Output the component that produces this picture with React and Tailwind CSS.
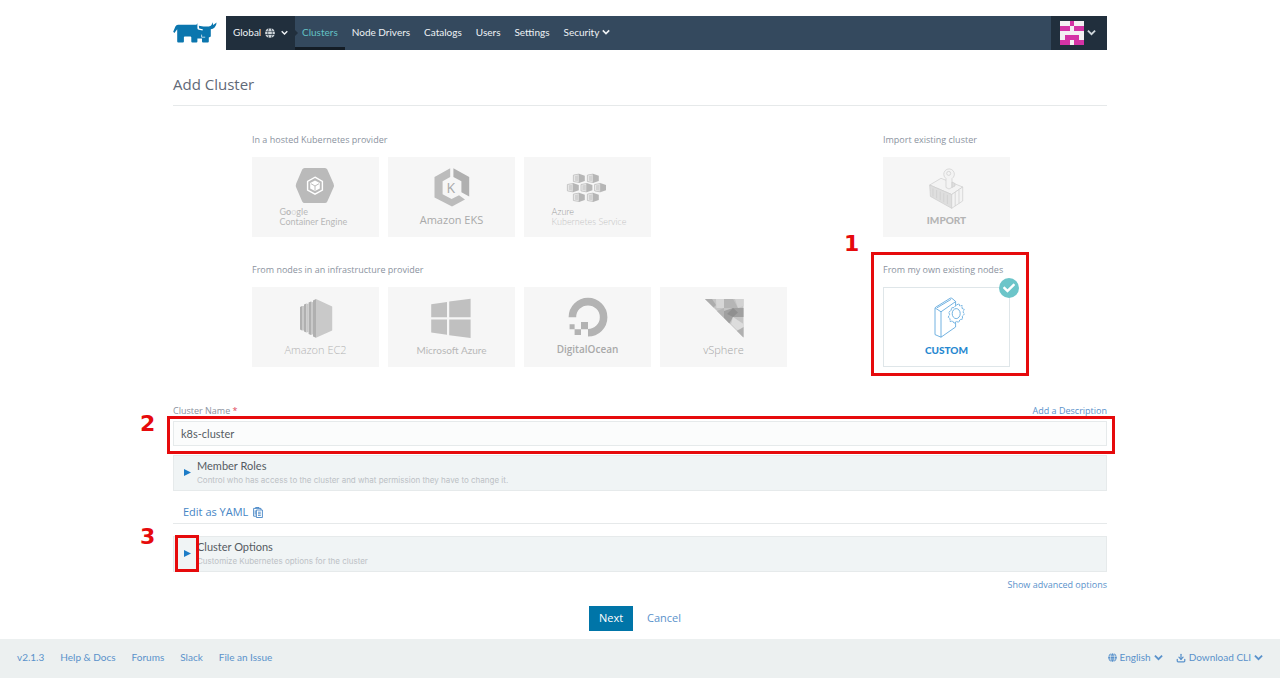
import { useState } from 'react';
import { FaGlobe, FaCheck } from 'react-icons/fa';
import { LuDownload } from 'react-icons/lu';

const RancherLogo = () => (
  <svg className="w-11 h-[22px]" viewBox="0 0 44 22" aria-label="Rancher">
    <path
      fill="#0b76ae"
      d="M.2 9.8 2.4 4.6Q3.2 2.8 5 2.8H23.4L24.4 1.2V6.2Q24.4 7.6 25.8 7.8L29.6 8.4 29.8 7.2 26.2 6.6 25.8 3.8 30.5 4.4H35.4Q38.2 4.6 38.8 2.6L39.4.2 40.2 3 43.6.4Q43.4 3.8 41.6 5.6 40 7.2 37.8 7.2V14.4L35.8 15.6V19.4Q35.8 20.4 34.8 20.4H30Q29 20.4 29 19.4V16.6H24.4V19.4Q24.4 20.4 23.4 20.4H19.3Q18.3 20.4 18.3 19.4V15.2Q18.3 14.4 17.4 14.4H11.8Q10.9 14.4 10.9 15.2V19.4Q10.9 20.4 9.9 20.4H5.2Q4.2 20.4 4.2 19.4V7.2L1.4 11Z"
    />
    <path fill="none" stroke="#fff" strokeWidth=".7" d="M28.6 12.6v2.6h3.6" />
  </svg>
);

// 5x5 identicon
const AVATAR = ['..#..', '##.##', '.....', '.###.', '##.##'];

const Avatar = () => (
  <svg className="w-6 h-6" viewBox="0 0 5 5" shapeRendering="crispEdges" aria-hidden="true">
    <rect width="5" height="5" fill="#f4f0f3" />
    {AVATAR.map((row, y) =>
      row.split('').map((c, x) => c === '#' && <rect key={`${x}${y}`} x={x} y={y} width="1" height="1" fill="#d433a6" />)
    )}
  </svg>
);

const Chevron = ({ className }) => (
  <svg className={className} viewBox="0 0 10 8" aria-hidden="true">
    <path fill="none" stroke="currentColor" strokeWidth="2" d="M1 1.8 5 5.8 9 1.8" />
  </svg>
);

const ClipboardIcon = () => (
  <svg className="w-[10px] h-[11px]" viewBox="0 0 10 11" fill="none" stroke="currentColor" strokeWidth=".9" aria-hidden="true">
    <path d="M3 9.2H.6V1.4H8V3M2.6 1.4V.5H6V1.4M2.2 3.4V7.6" />
    <path d="M3.4 3H9.4V10.5H3.4ZM5 5.2H7.8M5 6.8H7.8M5 8.4H7.8" />
  </svg>
);

const Logo = ({ children }) => (
  <svg className="w-10 h-10 shrink-0 overflow-visible" viewBox="0 0 40 40" aria-hidden="true">
    {children}
  </svg>
);

const GoogleLogo = () => (
  <Logo>
    <path fill="#bababa" d="M8.5 1H29Q30.5 1 31.3 2.5L37.5 16.5Q38.4 18.5 37.5 20.5L31.3 34.5Q30.5 36 29 36H8.5Q7 36 6.2 34.5L.2 20.5Q-.6 18.5.2 16.5L6.2 2.5Q7 1 8.5 1Z" />
    <path fill="#bababa" stroke="#fff" strokeWidth="1.4" d="M19 10.2 26.4 14.4V23L19 27.2 11.6 23V14.4Z" />
    <path fill="#fff" d="M19 13.4 23.8 16.1V21.4L19 24.1 14.2 21.4V16.1Z" />
    <path fill="none" stroke="#b4b4b4" strokeWidth=".9" d="M15 16.7 19 19 23 16.7M19 19V23.5" />
  </Logo>
);

const EksLogo = () => (
  <Logo>
    <path fill="#bcbcbc" d="M18.2 1.3 2.5 10V30.4L20 39.6 33 32.6 27 28.2 19.6 32 10.6 27.2V14.2L18.2 10Z" />
    <path fill="#b0b0b0" d="M21.4 1.3 37.2 10V29.4L29.4 25.2V14.2L21.4 10Z" />
    <text x="18.8" y="26" textAnchor="middle" fontSize="14" fill="#a9a9a9" fontFamily="Open Sans">K</text>
  </Logo>
);

const AKS_NODES = [[11, 11.3], [25, 11.3], [5, 20.7], [18.6, 20.7], [32.2, 20.7], [11, 30.3], [25, 30.3]];

const AksLogo = () => (
  <Logo>
    {AKS_NODES.map(([x, y]) => (
      <g key={`${x}-${y}`} transform={`translate(${x} ${y})`}>
        <path fill="#ececec" stroke="#bdbdbd" strokeWidth=".8" d="M-5.6-3.2 0-4.2V4.2L-5.6 3.2Z" />
        <path fill="#d2d2d2" d="M-4.2-2.4-.8-3V3L-4.2 2.4Z" />
        <path fill="#b6b6b6" d="M0-4.6 5.8-2.6V2.6L0 4.6Z" />
      </g>
    ))}
  </Logo>
);

const Ec2Logo = () => (
  <Logo>
    <path fill="#b0b0b0" d="M4 10 6 9V33.4L4 32.4ZM8 7.6 10.4 6.4V35.6L8 34.6ZM12.6 5.6 15 4.4V38L12.6 37ZM17 3.4 20 2V40.8L17 39.4Z" />
    <path fill="#c9c9c9" d="M6 9H8V33.4H6ZM10.4 6.4 12.6 7V35L10.4 35.6ZM15 4.4 17 5.2V37.2L15 38ZM20 2 36.2 9.4V33.4L20 40.8Z" />
  </Logo>
);

const WindowsLogo = () => (
  <Logo>
    <path fill="#c0c0c0" d="M-.8 7.2 15 5V20.2H-.8ZM17.2 4.6 38.6 1.8V20.2H17.2ZM-.8 22.4H15V37.8L-.8 35.4ZM17.2 22.4H38.6V41L17.2 38.2Z" />
  </Logo>
);

const OceanLogo = () => (
  <Logo>
    <path fill="none" stroke="#b3b3b3" strokeWidth="7.6" d="M4.4 20.2A15.6 15.6 0 1 1 20 35.8" />
    <path fill="#b3b3b3" d="M13 25H20V32.2H13ZM6.6 32.2H13V38H6.6ZM1.6 27.2H6.6V32.2H1.6Z" />
  </Logo>
);

const VsphereLogo = () => (
  <Logo>
    <path fill="#c4c4c4" d="M1 2H39.5V40.5Z" />
    <path fill="#acacac" d="M1 2H8L12 8 9.6 10.6Z" />
    <path fill="#d6d6d6" d="M12 2H20V11L12.4 11Z" />
    <path fill="#b5b5b5" d="M20 2H29L34 11H20ZM13 14 20 11V21Z" />
    <path fill="#a0a0a0" d="M20 14 29 11H39.5V20H29L25.4 26.4 20 21Z" />
    <path fill="#8f8f8f" d="M29 11 34 15.5 29 20 23 17Z" />
    <path fill="#dcdcdc" d="M29 20 39.5 27V32L33 33 27 27Z" />
    <path fill="#d2d2d2" d="M31 2H39.5V9L34 11Z" />
    <path fill="#b0b0b0" d="M33 34 39.5 30V40.5Z" />
  </Logo>
);

const ImportLogo = () => (
  <Logo>
    <g fill="#f3f3f3" stroke="#cdcdcd" strokeWidth=".7" strokeLinejoin="round">
      <path d="M2.7 18 14 11.3 35.7 20 24.7 27.5Z" />
      <path fill="#dedede" d="M2.7 18 24.7 27.5V41.3L3.4 29.4Z" />
      <path d="M24.7 27.5 35.7 20V34L24.7 41.3ZM28.2 25.2V39M32 22.8V36.4" />
      <path fill="none" d="M6 21.4V29.4M9.6 23V31.2M13.2 24.6V33.2M16.8 26.2V35.2M20.4 27.8V37" />
      <path d="M19 11.5V20.5L22 22 25 20.4V11.6A5.3 5.3 0 1 0 19 11.5Z" />
      <path fill="#dedede" d="M25 15 28 16.5V19L25 20.4Z" />
      <circle cx="21.7" cy="6.4" r="2" />
    </g>
  </Logo>
);

const CustomLogo = () => (
  <Logo>
    <g fill="#fff" stroke="#4f9fd9" strokeWidth=".8" strokeLinejoin="round">
      <path d="M8 11.4Q8 10.6 9 10L23.2 1.2Q24.2.8 25 1.4L28.6 4.4V30L14 40.2 8 37.6Z" />
      <path fill="none" d="M8.2 11 14 14.8 28.6 4.6M14 14.8V40.2M10 10.8 24 2.4" />
      <path
        strokeDasharray="2.4 .6"
        d="M29.4 8 32 6.8 32.8 9 35.2 8.6 35 11.4 37.2 12.2 36 15 37.4 17 35.4 19.2 35.6 22 33 22.6 31.6 25.4 29.4 24.4 27 26.4 25.6 24 23 24.4 23 21.6 21.2 20.2 22.6 17.6 21.8 15.2 24 13.6 24.6 10.8 27 10.6Z"
      />
      <ellipse cx="29.2" cy="16.6" rx="4" ry="5" />
    </g>
  </Logo>
);

const GoogleName = () => (
  <>G<b>o</b><span className="text-[#dcdcdc]">o</span>gle</>
);

const HOSTED = [
  { id: 'gke', Icon: GoogleLogo, lines: [<GoogleName />, 'Container Engine'], style: 'text-[9px] leading-[10px] text-[#b8b8b8] w-[72px]' },
  { id: 'eks', Icon: EksLogo, lines: ['Amazon EKS'], style: "text-[11px] leading-4 pt-[5px] font-['Open_Sans'] text-[#a9a9a9]" },
  { id: 'aks', Icon: AksLogo, lines: [<span className="text-[#9c9c9c]">Azure</span>, 'Kubernetes Service'], style: 'text-[9px] leading-[10px] font-light text-[#c4c4c4] w-[72px]' },
];

const INFRA = [
  { id: 'ec2', Icon: Ec2Logo, lines: ['Amazon EC2'], style: "text-[11px] leading-4 pt-[5px] font-['Open_Sans'] font-light text-[#b4b4b4]" },
  { id: 'azure', Icon: WindowsLogo, lines: ['Microsoft Azure'], style: 'text-[10px] leading-4 pt-[5px] text-[#b8b8b8]' },
  { id: 'do', Icon: OceanLogo, lines: ['DigitalOcean'], style: "text-[10px] leading-4 pt-1 font-['Open_Sans'] font-semibold text-[#a9a9a9]" },
  { id: 'vsphere', Icon: VsphereLogo, lines: ['vSphere'], style: "text-[11px] leading-4 pt-[5px] font-['Open_Sans'] font-light text-[#a6a6a6]" },
];

const IMPORT = [
  { id: 'import', Icon: ImportLogo, lines: ['IMPORT'], style: 'text-[10px] leading-4 pt-[5px] font-black text-[#b4b4b4]' },
];

const CUSTOM = [
  { id: 'custom', Icon: CustomLogo, lines: ['CUSTOM'], style: 'text-[10px] leading-4 pt-[5px] font-black text-[#2688d0]' },
];

const NAV = ['Node Drivers', 'Catalogs', 'Users', 'Settings'];

const ProviderGroup = ({ title, items, selected, onSelect, children }) => (
  <section className="relative">
    <h2 className="text-[9px] leading-3 font-['Open_Sans'] text-[#8b93a0] mb-[11px]">{title}</h2>
    <div className="flex gap-[9px]">
      {items.map(({ id, Icon, lines, style }) => {
        const active = selected === id;
        return (
          <button
            key={id}
            type="button"
            aria-pressed={active}
            onClick={() => onSelect(id)}
            className={`relative w-[127px] h-20 pt-[9px] border flex flex-col items-center cursor-pointer ${
              active ? 'bg-white border-[#dfe6e9]' : 'bg-[#f6f6f6] border-[#f6f6f6]'
            }`}
          >
            <Icon />
            <span className={`text-left ${style}`}>
              {lines.map((line, i) => (
                <span key={i} className="block whitespace-nowrap">{line}</span>
              ))}
            </span>
            {active && (
              <span className="absolute -top-[10px] -right-[10px] w-5 h-5 rounded-full bg-[#6cc5c9] text-white flex items-center justify-center">
                <FaCheck size={12} />
              </span>
            )}
          </button>
        );
      })}
    </div>
    {children}
  </section>
);

const Accordion = ({ title, detail, children }) => (
  <section className="relative h-9 bg-[#f0f4f5] border border-[#e6eaeb] flex items-center">
    <button type="button" className="flex items-center pb-px text-left cursor-pointer">
      <svg className="w-[7px] h-[7px] ml-[10px] mr-[6px]" viewBox="0 0 7 7" aria-hidden="true">
        <path fill="#1c7cc7" d="M0 0 7 3.5 0 7Z" />
      </svg>
      <span>
        <span className="block text-[11px] leading-[14px] text-[#555b62]">{title}</span>
        <span className="block text-[8px] leading-[14px] font-['Inter'] text-[#bcc1c5]">{detail}</span>
      </span>
    </button>
    {children}
  </section>
);

// Numbered red callout
const Callout = ({ number, box, label }) => (
  <>
    <span className={`absolute pointer-events-none border-[3px] border-[#e60a0c] ${box}`} />
    <span className={`absolute pointer-events-none font-['DejaVu_Sans'] font-bold text-[22px] leading-[22px] text-[#e60a0c] ${label}`}>
      {number}
    </span>
  </>
);

const Footer = () => (
  <footer className="bg-[#ecf0f0] h-[39px] px-[17px] pb-[2px] flex items-center justify-between text-[10px] text-[#5a92cb]">
    <nav className="flex gap-4">
      <a href="#version">v2.1.3</a>
      <a href="#docs">Help &amp; Docs</a>
      <a href="#forums">Forums</a>
      <a href="#slack">Slack</a>
      <a href="#issue">File an Issue</a>
    </nav>
    <div className="flex gap-[13px]">
      <button type="button" className="flex items-center gap-[3px] cursor-pointer">
        <FaGlobe size={9} /> English <Chevron className="w-[9px]" />
      </button>
      <button type="button" className="flex items-center gap-[3px] cursor-pointer">
        <LuDownload size={10} strokeWidth={3} /> Download CLI <Chevron className="w-[9px]" />
      </button>
    </div>
  </footer>
);

const App = () => {
  const [provider, setProvider] = useState('custom');
  const [name, setName] = useState('k8s-cluster');

  return (
    <div className="min-h-screen flex flex-col bg-white font-['Lato',sans-serif]">
      <div className="grow w-full max-w-[934px] mx-auto pt-4">
        {/* Header */}
        <header className="flex">
          <a href="#home" className="w-[53px] pt-[6px]"><RancherLogo /></a>
          <nav className="grow h-[34px] bg-[#34495e] flex text-[10px] text-[#eef2f5]">
            <button type="button" className="relative w-[69px] px-[7px] pb-px bg-[#212f3d] flex items-center cursor-pointer">
              Global
              <FaGlobe className="ml-1 text-[#cfd6db]" size={10} />
              <Chevron className="w-[7px] ml-auto" />
              <span className="absolute left-full top-[14px] border-y-[3px] border-y-transparent border-l-[3px] border-l-[#212f3d]" />
            </button>
            <a href="#clusters" className="px-[7px] pt-[2px] flex items-center border-b-[3px] border-[#141d26] text-[#63c1c4]">Clusters</a>
            {NAV.map((item) => (
              <a key={item} href={`#${item}`} className="px-[7px] pb-px flex items-center">{item}</a>
            ))}
            <button type="button" className="px-[7px] pb-px flex items-center gap-[3px] cursor-pointer">
              Security <Chevron className="w-[8px]" />
            </button>
            <button type="button" aria-label="Account" className="ml-auto w-14 pr-[2px] bg-[#212f3d] flex items-center justify-center gap-[3px] cursor-pointer">
              <Avatar />
              <Chevron className="w-[9px] text-[#cfd6db]" />
            </button>
          </nav>
        </header>

        <h1 className="pt-6 pb-[11px] text-[15px] leading-5 font-['Open_Sans'] text-[#5f6977] border-b border-[#e6e9ea]">Add Cluster</h1>

        {/* Providers */}
        <main>
          <div className="pl-[79px] pt-7 grid grid-cols-[535px_127px] gap-x-24 gap-y-[27px]">
            <ProviderGroup title="In a hosted Kubernetes provider" items={HOSTED} selected={provider} onSelect={setProvider} />
            <ProviderGroup title="Import existing cluster" items={IMPORT} selected={provider} onSelect={setProvider} />
            <ProviderGroup title="From nodes in an infrastructure provider" items={INFRA} selected={provider} onSelect={setProvider} />
            <ProviderGroup title="From my own existing nodes" items={CUSTOM} selected={provider} onSelect={setProvider}>
              <Callout number="1" box="-left-3 -right-[19px] -top-3 -bottom-[9px]" label="-left-[39px] -top-[31px]" />
            </ProviderGroup>
          </div>

          {/* Cluster name */}
          <div className="flex justify-between pt-[38px] text-[9px] leading-3 font-['Open_Sans']">
            <label htmlFor="cluster-name" className="text-[#8b93a0]">
              Cluster Name <span className="text-[#e0455a]">*</span>
            </label>
            <a href="#description" className="text-[#5a92cb]">Add a Description</a>
          </div>
          <div className="relative pt-1">
            <input
              id="cluster-name"
              type="text"
              value={name}
              onChange={(e) => setName(e.target.value)}
              className="block w-full h-[25px] px-[7px] text-[11px] text-[#555b62] bg-[#fbfcfc] border border-[#e6eaeb] outline-none"
            />
            <Callout number="2" box="-left-[6px] -right-2 -top-px -bottom-2" label="-left-[33px] -top-1" />
          </div>

          <div className="pt-[9px]">
            <Accordion title="Member Roles" detail="Control who has access to the cluster and what permission they have to change it." />
          </div>

          <div className="mt-[11px] h-[22px] pl-[10px] border-b border-[#e6e9ea] flex items-center">
            <a href="#yaml" className="flex items-center gap-[5px] text-[11px] font-['Open_Sans'] text-[#4585c5]">
              Edit as YAML <ClipboardIcon />
            </a>
          </div>

          <div className="pt-3">
            <Accordion title="Cluster Options" detail="Customize Kubernetes options for the cluster">
              <Callout number="3" box="left-px w-6 -top-[2px] -bottom-px" label="-left-[34px] -top-[11px]" />
            </Accordion>
          </div>

          <div className="pt-[7px] text-right text-[9px] leading-3 font-['Open_Sans']">
            <a href="#advanced" className="text-[#5a92cb]">Show advanced options</a>
          </div>

          <div className="pt-[15px] pb-2 flex justify-center gap-[14px] text-[11px] font-['Open_Sans']">
            <button type="button" className="h-[25px] px-[10px] bg-[#0075a8] text-white cursor-pointer">Next</button>
            <button type="button" className="h-[25px] pr-[10px] text-[#5a92cb] cursor-pointer">Cancel</button>
          </div>
        </main>
      </div>
      <Footer />
    </div>
  );
};

export default App;
